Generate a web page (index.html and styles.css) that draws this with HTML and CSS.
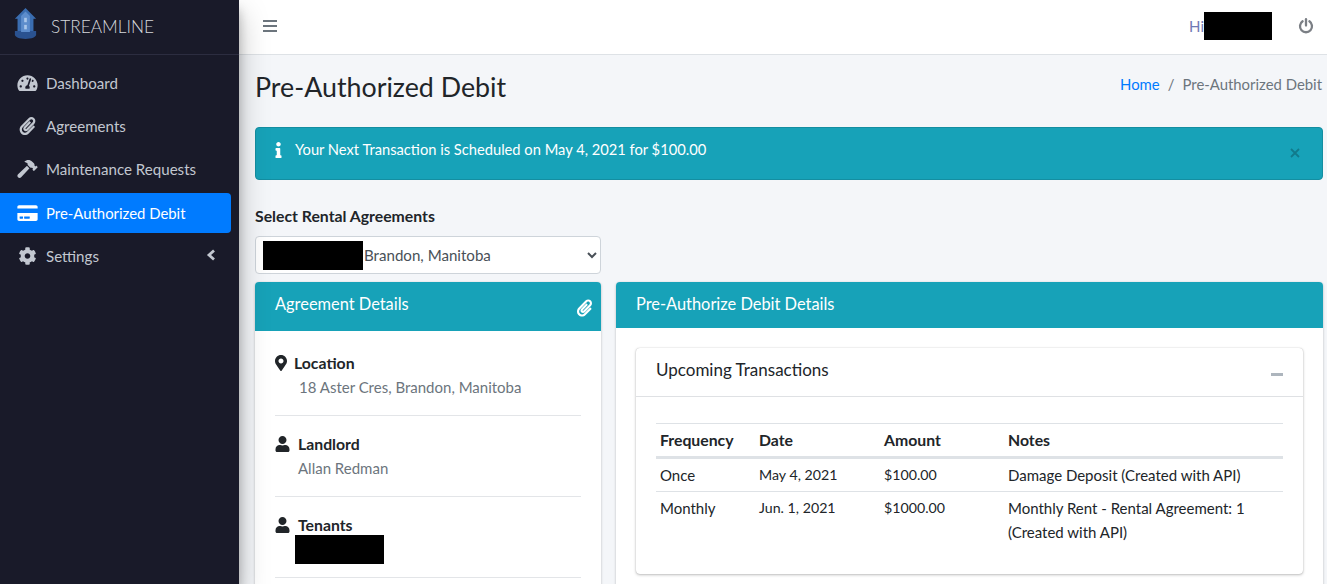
FILE: index.html
```html
<!DOCTYPE html>
<html lang="en">
<head>
<meta charset="utf-8">
<title>Pre-Authorized Debit</title>
<link rel="stylesheet" href="styles.css">
</head>
<body>
<div class="app">
  <aside class="sidebar">
    <div class="brand">
      <svg class="logo" viewBox="0 0 26 36"><path fill="#3a6db0" d="M13 0 25 12l-3 0v18H4V12l-3 0z"/><path fill="#2a5290" d="M1 26h24v4c0 3-5 5-12 5S1 33 1 30z"/><path fill="#5d8dcc" d="M13 4 8 9v18h10V9z"/><rect x="11.500" y="11" width="3" height="5" fill="#a9c6ea"/><rect x="11.500" y="19" width="3" height="5" fill="#a9c6ea"/></svg>
      <span class="brand-text">STREAMLINE</span>
    </div>
    <nav class="nav">
      <a class="nav-item"><svg class="nav-icon" viewBox="0 0 576 512"><path d="M288 32C128.94 32 0 160.94 0 320c0 52.8 14.25 102.26 39.06 144.8 5.61 9.62 16.3 15.2 27.44 15.2h443c11.14 0 21.83-5.58 27.44-15.2C561.75 422.26 576 372.8 576 320c0-159.06-128.94-288-288-288zm0 64c14.71 0 26.58 10.13 30.32 23.65-1.11 2.26-2.64 4.23-3.45 6.67l-9.22 27.67c-5.13 3.49-10.97 6.01-17.64 6.01-17.67 0-32-14.33-32-32S270.33 96 288 96zM96 384c-17.67 0-32-14.33-32-32s14.33-32 32-32 32 14.33 32 32-14.33 32-32 32zm48-160c-17.67 0-32-14.33-32-32s14.33-32 32-32 32 14.33 32 32-14.33 32-32 32zm246.77-72.41l-61.33 184C343.13 347.33 352 364.54 352 384c0 11.72-3.38 22.55-8.88 32H232.88c-5.5-9.45-8.88-20.28-8.88-32 0-33.94 26.5-61.43 59.9-63.59l61.34-184.01c4.17-12.56 17.73-19.45 30.36-15.17 12.57 4.19 19.35 17.79 15.17 30.36zm14.66 57.2l15.52-46.55c3.47-1.29 7.13-2.23 11.05-2.23 17.67 0 32 14.33 32 32s-14.33 32-32 32c-11.38-.01-20.89-6.28-26.57-15.22zM480 384c-17.67 0-32-14.33-32-32s14.33-32 32-32 32 14.33 32 32-14.33 32-32 32z"/></svg>Dashboard</a>
      <a class="nav-item"><svg class="nav-icon" viewBox="0 0 448 512"><path d="M43.246 466.142c-58.43-60.289-57.341-157.511 1.386-217.581L254.392 34c44.316-45.332 116.351-45.336 160.671 0 43.89 44.894 43.943 117.329 0 162.276L232.214 383.128c-29.855 30.537-78.633 30.111-107.982-.998-28.275-29.97-27.368-77.473 1.452-106.953l143.743-146.835c6.182-6.314 16.312-6.422 22.626-.241l22.861 22.379c6.315 6.182 6.422 16.312.241 22.626L171.427 319.927c-4.932 5.045-5.236 13.428-.648 18.292 4.372 4.634 11.245 4.711 15.688.165l182.849-186.851c19.613-20.062 19.613-52.725-.011-72.798-19.189-19.627-49.957-19.637-69.154 0L90.39 293.295c-34.763 35.56-35.299 93.12-1.191 128.313 34.01 35.093 88.985 35.137 123.058.286l172.06-175.999c6.177-6.319 16.307-6.433 22.626-.256l22.877 22.364c6.319 6.177 6.434 16.307.256 22.626l-172.06 175.998c-59.576 60.938-155.943 60.216-214.77-.485z"/></svg>Agreements</a>
      <a class="nav-item"><svg class="nav-icon" viewBox="0 0 576 512"><path d="M571.31 193.94l-22.63-22.63c-6.25-6.25-16.38-6.25-22.63 0l-11.31 11.31-28.9-28.9c5.63-21.31.36-44.9-16.35-61.61l-45.25-45.25c-62.48-62.48-163.79-62.48-226.28 0l90.51 45.25v18.75c0 16.97 6.74 33.25 18.75 45.25l49.14 49.14c16.71 16.71 40.3 21.98 61.61 16.35l28.9 28.9-11.31 11.31c-6.25 6.25-6.25 16.38 0 22.63l22.63 22.63c6.25 6.25 16.38 6.25 22.63 0l90.51-90.51c6.23-6.24 6.23-16.37-.02-22.62zm-286.72-15.2c-3.7-3.7-6.84-7.79-9.85-11.95L19.64 404.96c-25.57 23.88-26.26 64.19-1.53 88.93s65.05 24.05 88.93-1.53l238.13-255.07c-3.96-2.91-7.9-5.9-11.44-9.44l-49.14-49.14z"/></svg>Maintenance Requests</a>
      <a class="nav-item active"><svg class="nav-icon" viewBox="0 0 576 512"><path d="M0 432c0 26.5 21.5 48 48 48h480c26.5 0 48-21.5 48-48V256H0v176zm192-68c0-6.6 5.4-12 12-12h136c6.6 0 12 5.4 12 12v40c0 6.6-5.4 12-12 12H204c-6.6 0-12-5.4-12-12v-40zm-128 0c0-6.6 5.4-12 12-12h72c6.6 0 12 5.4 12 12v40c0 6.6-5.4 12-12 12H76c-6.6 0-12-5.4-12-12v-40zM576 80v48H0V80c0-26.5 21.5-48 48-48h480c26.5 0 48 21.5 48 48z"/></svg>Pre-Authorized Debit</a>
      <a class="nav-item"><svg class="nav-icon" viewBox="0 0 512 512"><path d="M487.4 315.7l-42.6-24.6c4.3-23.2 4.3-47 0-70.2l42.6-24.6c4.9-2.8 7.1-8.6 5.5-14-11.1-35.6-30-67.8-54.7-94.6-3.8-4.1-10-5.1-14.8-2.3L380.8 110c-17.9-15.4-38.5-27.3-60.8-35.1V25.8c0-5.6-3.9-10.5-9.4-11.7-36.7-8.2-74.3-7.8-109.2 0-5.5 1.2-9.4 6.1-9.4 11.7V75c-22.2 7.9-42.8 19.8-60.8 35.1L88.7 85.5c-4.9-2.8-11-1.9-14.8 2.3-24.7 26.7-43.6 58.9-54.7 94.6-1.7 5.4.6 11.2 5.5 14L67.3 221c-4.3 23.2-4.3 47 0 70.2l-42.6 24.6c-4.9 2.8-7.1 8.6-5.5 14 11.1 35.6 30 67.8 54.7 94.6 3.8 4.1 10 5.1 14.8 2.3l42.6-24.6c17.9 15.4 38.5 27.3 60.8 35.1v49.2c0 5.6 3.9 10.5 9.4 11.7 36.7 8.2 74.3 7.8 109.2 0 5.5-1.2 9.4-6.1 9.4-11.7v-49.2c22.2-7.9 42.8-19.8 60.8-35.1l42.6 24.6c4.9 2.8 11 1.9 14.8-2.3 24.7-26.7 43.6-58.9 54.7-94.6 1.5-5.5-.7-11.3-5.6-14.1zM256 336c-44.1 0-80-35.9-80-80s35.9-80 80-80 80 35.9 80 80-35.9 80-80 80z"/></svg>Settings<svg class="nav-caret" viewBox="0 0 10 12"><path d="M8 1.500 3 6l5 4.500" fill="none" stroke="currentColor" stroke-width="2.800"/></svg></a>
    </nav>
  </aside>
  <div class="main">
    <header class="topbar">
      <svg class="menu-icon" viewBox="0 0 14 12"><path d="M0 1h14M0 6h14M0 11h14" stroke="currentColor" stroke-width="2"/></svg>
      <div class="user">
        <span class="hi">Hi</span><span class="redact redact-user"></span>
        <svg class="power" viewBox="0 0 16 16"><path d="M4.600 3.300a6 6 0 1 0 6.800 0" fill="none" stroke="currentColor" stroke-width="2.300" stroke-linecap="round"/><path d="M8 1.200v6.300" stroke="currentColor" stroke-width="2.300" stroke-linecap="round"/></svg>
      </div>
    </header>
    <main class="content">
      <div class="page-head">
        <h1 class="title">Pre-Authorized Debit</h1>
        <div class="crumbs"><a class="crumb-link">Home</a><span class="crumb-sep">/</span><span class="crumb-cur">Pre-Authorized Debit</span></div>
      </div>
      <div class="alert">
        <svg class="alert-icon" viewBox="0 0 192 512"><path d="M20 424.229h20V279.771H20c-11.046 0-20-8.954-20-20V212c0-11.046 8.954-20 20-20h112c11.046 0 20 8.954 20 20v212.229h20c11.046 0 20 8.954 20 20V492c0 11.046-8.954 20-20 20H20c-11.046 0-20-8.954-20-20v-47.771c0-11.046 8.954-20 20-20zM96 0C56.235 0 24 32.235 24 72s32.235 72 72 72 72-32.235 72-72S135.764 0 96 0z"/></svg>
        <span class="alert-text">Your Next Transaction is Scheduled on May 4, 2021 for $100.00</span>
        <svg class="alert-close" viewBox="0 0 10 10"><path d="M1 1l8 8M9 1l-8 8" stroke="currentColor" stroke-width="1.800"/></svg>
      </div>
      <label class="field-label" for="agreement">Select Rental Agreements</label>
      <div class="select-wrap">
        <select class="select" id="agreement"><option>18 Aster Cres, Brandon, Manitoba</option></select>
        <span class="redact redact-select"></span>
      </div>
      <div class="columns">
        <section class="card card-left">
          <div class="card-head head-left">
            <h2 class="card-title">Agreement Details</h2>
            <svg class="head-clip" viewBox="0 0 448 512"><path d="M43.246 466.142c-58.43-60.289-57.341-157.511 1.386-217.581L254.392 34c44.316-45.332 116.351-45.336 160.671 0 43.89 44.894 43.943 117.329 0 162.276L232.214 383.128c-29.855 30.537-78.633 30.111-107.982-.998-28.275-29.97-27.368-77.473 1.452-106.953l143.743-146.835c6.182-6.314 16.312-6.422 22.626-.241l22.861 22.379c6.315 6.182 6.422 16.312.241 22.626L171.427 319.927c-4.932 5.045-5.236 13.428-.648 18.292 4.372 4.634 11.245 4.711 15.688.165l182.849-186.851c19.613-20.062 19.613-52.725-.011-72.798-19.189-19.627-49.957-19.637-69.154 0L90.39 293.295c-34.763 35.56-35.299 93.12-1.191 128.313 34.01 35.093 88.985 35.137 123.058.286l172.06-175.999c6.177-6.319 16.307-6.433 22.626-.256l22.877 22.364c6.319 6.177 6.434 16.307.256 22.626l-172.06 175.998c-59.576 60.938-155.943 60.216-214.77-.485z"/></svg>
          </div>
          <div class="details">
            <div class="detail">
              <div class="detail-label"><svg class="pin" viewBox="0 0 384 512"><path d="M172.268 501.67C26.97 291.031 0 269.413 0 192 0 85.961 85.961 0 192 0s192 85.961 192 192c0 77.413-26.97 99.031-172.268 309.67-9.535 13.774-29.93 13.773-39.464 0zM192 272c44.183 0 80-35.817 80-80s-35.817-80-80-80-80 35.817-80 80 35.817 80 80 80z"/></svg>Location</div>
              <div class="detail-value value-loc">18 Aster Cres, Brandon, Manitoba</div>
            </div>
            <div class="detail">
              <div class="detail-label"><svg class="person" viewBox="0 0 448 512"><path d="M224 256c70.7 0 128-57.3 128-128S294.7 0 224 0 96 57.3 96 128s57.3 128 128 128zm89.6 32h-16.7c-22.2 10.2-46.9 16-72.9 16s-50.6-5.8-72.9-16h-16.7C60.2 288 0 348.2 0 422.4V464c0 26.5 21.500 48 48 48h352c26.5 0 48-21.5 48-48v-41.6c0-74.2-60.2-134.4-134.4-134.4z"/></svg>Landlord</div>
              <div class="detail-value">Allan Redman</div>
            </div>
            <div class="detail">
              <div class="detail-label"><svg class="person" viewBox="0 0 448 512"><path d="M224 256c70.7 0 128-57.3 128-128S294.7 0 224 0 96 57.3 96 128s57.3 128 128 128zm89.6 32h-16.7c-22.2 10.2-46.9 16-72.9 16s-50.6-5.8-72.9-16h-16.7C60.2 288 0 348.2 0 422.4V464c0 26.5 21.500 48 48 48h352c26.5 0 48-21.5 48-48v-41.6c0-74.2-60.2-134.4-134.4-134.4z"/></svg>Tenants</div>
              <span class="redact redact-tenant"></span>
            </div>
          </div>
        </section>
        <section class="card card-right">
          <div class="card-head head-right"><h2 class="card-title">Pre-Authorize Debit Details</h2></div>
          <div class="card-right-body">
            <div class="panel">
              <div class="panel-head">
                <h3 class="panel-title">Upcoming Transactions</h3>
                <span class="panel-minus"></span>
              </div>
              <div class="panel-body">
                <table class="table">
                  <thead><tr><th class="col-freq">Frequency</th><th class="col-date">Date</th><th class="col-amt">Amount</th><th>Notes</th></tr></thead>
                  <tbody>
                    <tr><td>Once</td><td class="num">May 4, 2021</td><td class="num">$100.00</td><td>Damage Deposit (Created with API)</td></tr>
                    <tr><td>Monthly</td><td class="num">Jun. 1, 2021</td><td class="num">$1000.00</td><td>Monthly Rent - Rental Agreement: 1<br>(Created with API)</td></tr>
                  </tbody>
                </table>
              </div>
            </div>
          </div>
        </section>
      </div>
    </main>
  </div>
</div>
</body>
</html>
```
FILE: styles.css
```css
* { box-sizing: border-box; }
html, body { margin: 0; height: 584px; overflow: hidden; }
body { font-family: Lato, "Open Sans", sans-serif; font-size: 15px; line-height: 24px; color: #212529; background: #f4f6f9; }
h1, h2, h3 { margin: 0; font-weight: 400; }

.app { display: flex; height: 584px; }

.sidebar { width: 239px; flex: none; background: #191a29; box-shadow: 0 14px 28px rgba(0,0,0,.25), 0 10px 10px rgba(0,0,0,.22); position: relative; z-index: 2; }
.brand { height: 55px; display: flex; align-items: center; padding-left: 14px; border-bottom: 1px solid #2c2d40; }
.logo { width: 23px; height: 32px; margin: -6px 14px 0 0; }
.brand-text { font-size: 17.300px; font-weight: 300; color: #d6d8dd; }
.nav { display: flex; flex-direction: column; gap: 3px; padding: 8px 8px 0 0; }
.nav-item { height: 40px; display: flex; align-items: center; padding-left: 17px; color: #c2c7d0; border-radius: 0 4px 4px 0; font-size: 15.100px; }
.nav-item.active { background: #007bff; color: #fff; margin-top: 1px; font-size: 14.900px; }
.nav-icon { width: 21px; height: 18px; margin-right: 8px; fill: currentColor; flex: none; }
.nav-caret { width: 10px; height: 12px; margin-left: auto; margin-right: 15px; margin-top: -2px; }

.main { flex: 1; min-width: 0; display: flex; flex-direction: column; }
.topbar { height: 55px; flex: none; background: #fff; border-bottom: 1px solid #dee2e6; display: flex; align-items: center; justify-content: space-between; padding: 0 13px 2px 24px; }
.menu-icon { width: 14px; height: 12px; color: #6c757d; }
.user { display: flex; align-items: center; }
.hi { color: #6f7ab5; font-size: 15px; }
.redact { display: block; background: #000; }
.redact-user { width: 68px; height: 28px; margin-right: 26px; }
.power { width: 16px; height: 16px; color: #7b7f85; }

.content { padding: 0 4px 0 16px; }
.page-head { height: 72px; display: flex; align-items: center; justify-content: space-between; padding-bottom: 8px; }
.title { font-size: 26.800px; line-height: 34px; color: #212529; }
.crumbs { display: flex; gap: 8px; margin-top: -6px; margin-right: 1px; color: #6c757d; font-size: 14.900px; }
.crumb-link { color: #007bff; }
.alert { height: 53px; background: #17a2b8; border: 1px solid #148ea1; border-radius: 4px; display: flex; align-items: flex-start; padding: 9px 19px; color: #fff; font-size: 14.700px; }
.alert-icon { width: 7px; height: 16px; fill: #fff; margin: 5px 13px 0 0; flex: none; }
.alert-close { width: 10px; height: 10px; margin: 11px 3px 0 auto; color: #117a8b; }
.field-label { display: block; margin-top: 24px; font-weight: 700; font-size: 15.800px; }
.select-wrap { position: relative; width: 346px; margin-top: 8px; }
.select { display: block; width: 346px; height: 38px; padding: 0 7px; font: inherit; font-size: 15.100px; color: #495057; background: #fff; border: 1px solid #ced4da; border-radius: 4px; }
.redact-select { position: absolute; left: 8px; top: 5px; width: 100px; height: 29px; }

.columns { display: flex; gap: 15px; margin-top: 8px; align-items: flex-start; }
.card { background: #fff; border-radius: 4px 4px 0 0; box-shadow: 0 0 1px rgba(0,0,0,.125), 0 1px 3px rgba(0,0,0,.2); }
.card-left { width: 346px; flex: none; }
.card-right { flex: 1; min-width: 0; }
.card-head { background: #17a2b8; color: #fff; display: flex; justify-content: space-between; padding: 10px 9px 0 20px; border-radius: 4px 4px 0 0; }
.head-left { height: 49px; }
.head-right { height: 46px; }
.card-title { font-size: 16.400px; line-height: 24px; }
.head-clip { width: 15px; height: 18px; fill: #fff; margin-top: 7px; }
.details { padding: 20px 20px 20px; }
.detail { height: 65px; border-bottom: 1px solid #e3e5e8; }
.detail + .detail { margin-top: 16px; }
.detail-label { display: flex; align-items: center; font-weight: 700; font-size: 15.800px; }
.pin { width: 12px; height: 16px; margin-right: 7px; fill: #212529; }
.person { width: 15px; height: 16px; margin-right: 8px; fill: #212529; }
.detail-value { margin-left: 23px; color: #6c757d; font-size: 15px; }
.value-loc { margin-left: 24px; }
.redact-tenant { width: 89px; height: 29px; margin-left: 20px; margin-top: -2px; }

.card-right-body { padding: 20px; }
.panel { height: 226px; border-radius: 4px; box-shadow: 0 0 1px rgba(0,0,0,.25), 0 1px 3px rgba(0,0,0,.25); }
.panel-head { height: 49px; display: flex; justify-content: space-between; padding: 10px 20px; border-bottom: 1px solid #dfe1e4; }
.panel-title { font-size: 17px; line-height: 24px; font-weight: 400; }
.panel-minus { width: 12px; height: 3px; margin-top: 15px; background: #adb5bd; }
.panel-body { padding: 26px 20px 0; }
.table { width: 100%; border-collapse: separate; border-spacing: 0; font-size: 15px; table-layout: fixed; }
.table th { text-align: left; font-weight: 700; font-size: 15.800px; padding: 0 4px; height: 36px; border-top: 1px solid #dee2e6; border-bottom: 3px solid #dee2e6; }
.table td { padding: 4px 4px; vertical-align: top; border-top: 1px solid #dee2e6; }
.table .num { font-size: 14.200px; }
.table tbody tr:first-child td { border-top: 0; height: 32px; }
.col-freq { width: 99px; }
.col-date { width: 125px; }
.col-amt { width: 124px; }
```
